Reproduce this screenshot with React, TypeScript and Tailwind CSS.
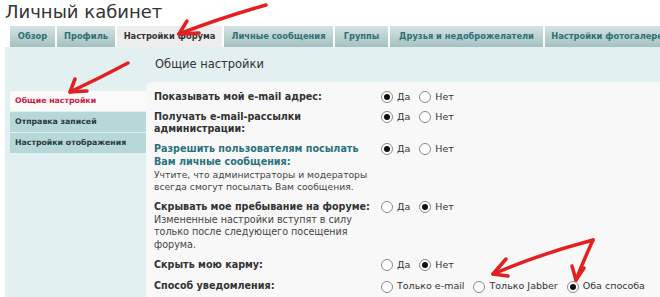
import React from "react";

const font = { fontFamily: '"DejaVu Sans", Verdana, sans-serif' };

function Radio({ checked }: { checked?: boolean }) {
  return (
    <span className="inline-flex w-[12px] h-[12px] rounded-full border border-[#8a8a8a] bg-white items-center justify-center shrink-0">
      {checked ? <span className="w-[6px] h-[6px] rounded-full bg-[#111]" /> : null}
    </span>
  );
}

function Options({ items, checked }: { items: string[]; checked: number }) {
  return (
    <div className="flex items-center gap-[9px] h-[12.7px] shrink-0">
      {items.map((t, i) => (
        <span key={t} className="flex items-center gap-[4px]">
          <Radio checked={i === checked} />
          <span className="text-[9.5px] text-[#333] whitespace-nowrap">{t}</span>
        </span>
      ))}
    </div>
  );
}

const tabs: [string, number][] = [
  ["Обзор", 45],
  ["Профиль", 58],
  ["Настройки форума", 105],
  ["Личные сообщения", 109],
  ["Группы", 53],
  ["Друзья и недоброжелатели", 153],
  ["Настройки фотогалереи", 130],
];

export default function App() {
  return (
    <div className="relative w-[660px] h-[297px] overflow-hidden bg-white" style={font}>
      <div className="pl-[5px] h-[26px] text-[18px] leading-[24px] text-[#333]">Личный кабинет</div>
      <div className="flex pl-[10px] gap-[2px] h-[21px] overflow-hidden">
        {tabs.map(([t, w], i) =>
          i === 2 ? (
            <div
              key={t}
              style={{ width: w }}
              className="shrink-0 flex items-center justify-center bg-[#ededed] text-[8.3px] font-bold text-[#333] whitespace-nowrap"
            >
              {t}
            </div>
          ) : (
            <div
              key={t}
              style={{ width: w }}
              className="shrink-0 flex items-center justify-center bg-gradient-to-b from-[#d5e2e2] to-[#a5c1c1] text-[8.3px] font-bold text-[#2f6f78] whitespace-nowrap"
            >
              {t}
            </div>
          )
        )}
      </div>
      <div className="ml-[5px] bg-[#e2f0f1] flex h-[250px] overflow-hidden">
        <div className="w-[141px] pt-[44px] pl-[5px] flex flex-col gap-[1px] shrink-0">
          <div className="h-[20px] flex items-center pl-[5px] bg-[#fafafa] text-[7.8px] font-bold text-[#cc1a3f] whitespace-nowrap">Общие настройки</div>
          <div className="h-[20px] flex items-center pl-[5px] bg-[#b6d8d8] text-[7.8px] font-bold text-[#2d3a3a] whitespace-nowrap">Отправка записей</div>
          <div className="h-[20px] flex items-center pl-[5px] bg-[#b6d8d8] text-[7.8px] font-bold text-[#2d3a3a] whitespace-nowrap">Настройки отображения</div>
        </div>
        <div className="flex-1 flex flex-col">
          <div className="h-[35px] shrink-0 pl-[9px] flex items-center text-[11.5px] text-[#333]">Общие настройки</div>
          <div className="flex-1 bg-[#f8f8f8] rounded-tl-[6px] pl-[8px] pt-[9px] flex flex-col gap-[7px] text-[9.6px] leading-[12.7px] whitespace-nowrap">
            <div className="flex">
              <div className="w-[227px] shrink-0 font-bold text-[#333]">Показывать мой e-mail адрес:</div>
              <Options items={["Да", "Нет"]} checked={0} />
            </div>
            <div className="flex">
              <div className="w-[227px] shrink-0 font-bold text-[#333]">
                Получать e-mail-рассылки
                <br />
                администрации:
              </div>
              <Options items={["Да", "Нет"]} checked={0} />
            </div>
            <div className="flex">
              <div className="w-[227px] shrink-0">
                <div className="font-bold text-[#2a727c]">
                  Разрешить пользователям посылать
                  <br />
                  Вам личные сообщения:
                </div>
                <div className="text-[#444] text-[9.2px]">
                  Учтите, что администраторы и модераторы
                  <br />
                  всегда смогут посылать Вам сообщения.
                </div>
              </div>
              <Options items={["Да", "Нет"]} checked={0} />
            </div>
            <div className="flex">
              <div className="w-[227px] shrink-0">
                <div className="font-bold text-[#333]">Скрывать мое пребывание на форуме:</div>
                <div className="text-[#444] text-[9.6px]">
                  Измененные настройки вступят в силу
                  <br />
                  только после следующего посещения
                  <br />
                  форума.
                </div>
              </div>
              <Options items={["Да", "Нет"]} checked={1} />
            </div>
            <div className="flex">
              <div className="w-[227px] shrink-0 font-bold text-[#333]">Скрыть мою карму:</div>
              <Options items={["Да", "Нет"]} checked={1} />
            </div>
            <div className="flex pt-[2px]">
              <div className="w-[227px] shrink-0 font-bold text-[#333]">Способ уведомления:</div>
              <Options items={["Только e-mail", "Только Jabber", "Оба способа"]} checked={2} />
            </div>
          </div>
        </div>
      </div>
      <svg className="absolute inset-0 pointer-events-none" width="660" height="297" viewBox="0 0 660 297">
        <g stroke="#e3201f" strokeWidth="3.5" strokeLinecap="round" strokeLinejoin="round" fill="none">
          <path d="M266 5 Q220 18 179 34" />
          <path d="M187 21 L179 34 L199 33" />
          <path d="M128 63 Q100 78 70 92" />
          <path d="M75 79 L70 92 L87 91" />
          <path d="M593 240 Q540 254 493 274" />
          <path d="M506 259 L493 274 L508 276" />
          <path d="M593 240 Q583 262 576 280" />
          <path d="M572 266 L576 280 L584 268" />
        </g>
      </svg>
    </div>
  );
}
